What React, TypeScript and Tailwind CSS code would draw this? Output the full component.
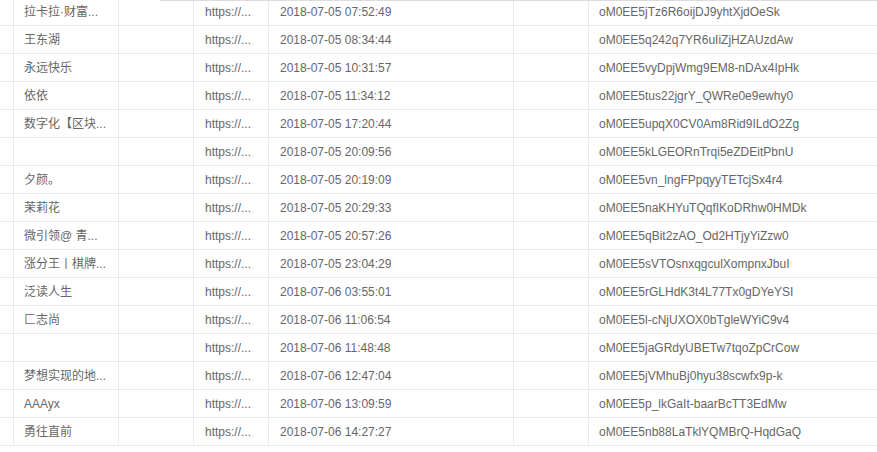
import React from "react";

const rows: [string, string, string][] = [
  ["拉卡拉·财富...", "2018-07-05 07:52:49", "oM0EE5jTz6R6oijDJ9yhtXjdOeSk"],
  ["王东湖", "2018-07-05 08:34:44", "oM0EE5q242q7YR6uIiZjHZAUzdAw"],
  ["永远快乐", "2018-07-05 10:31:57", "oM0EE5vyDpjWmg9EM8-nDAx4IpHk"],
  ["依依", "2018-07-05 11:34:12", "oM0EE5tus22jgrY_QWRe0e9ewhy0"],
  ["数字化【区块...", "2018-07-05 17:20:44", "oM0EE5upqX0CV0Am8Rid9ILdO2Zg"],
  ["", "2018-07-05 20:09:56", "oM0EE5kLGEORnTrqi5eZDEitPbnU"],
  ["夕颜。", "2018-07-05 20:19:09", "oM0EE5vn_lngFPpqyyTETcjSx4r4"],
  ["茉莉花", "2018-07-05 20:29:33", "oM0EE5naKHYuTQqfIKoDRhw0HMDk"],
  ["微引领@ 青...", "2018-07-05 20:57:26", "oM0EE5qBit2zAO_Od2HTjyYiZzw0"],
  ["涨分王丨棋牌...", "2018-07-05 23:04:29", "oM0EE5sVTOsnxqgculXompnxJbuI"],
  ["泛读人生", "2018-07-06 03:55:01", "oM0EE5rGLHdK3t4L77Tx0gDYeYSI"],
  ["匚志尚", "2018-07-06 11:06:54", "oM0EE5l-cNjUXOX0bTgleWYiC9v4"],
  ["", "2018-07-06 11:48:48", "oM0EE5jaGRdyUBETw7tqoZpCrCow"],
  ["梦想实现的地...", "2018-07-06 12:47:04", "oM0EE5jVMhuBj0hyu38scwfx9p-k"],
  ["AAAyx", "2018-07-06 13:09:59", "oM0EE5p_lkGaIt-baarBcTT3EdMw"],
  ["勇往直前", "2018-07-06 14:27:27", "oM0EE5nb88LaTklYQMBrQ-HqdGaQ"],
];

export default function App() {
  return (
    <div
      className="relative w-[877px] h-[452px] overflow-hidden bg-white text-[12px] text-[#666]"
      style={{ fontFamily: '"Liberation Sans", "Noto Sans CJK SC", sans-serif' }}
    >
      <div className="absolute top-0 left-[160px] right-0 h-px bg-[#dcdcdc]" />
      <div className="-mt-[2px]">
        {rows.map(([name, date, id], i) => (
          <div key={i} className="flex h-[28px] border-b border-[#e8e8e8]">
            <div className="w-[13px] shrink-0" />
            <div className="w-[105px] shrink-0 border-l border-[#ebebeb] pl-[10px] flex items-center whitespace-nowrap overflow-hidden">
              {name}
            </div>
            <div className="w-[75px] shrink-0 border-l border-[#ebebeb]" />
            <div className="w-[75px] shrink-0 border-l border-[#ebebeb] pl-[11px] flex items-center whitespace-nowrap overflow-hidden">
              https://...
            </div>
            <div className="w-[245px] shrink-0 border-l border-[#ebebeb] pl-[11px] flex items-center whitespace-nowrap overflow-hidden">
              {date}
            </div>
            <div className="w-[75px] shrink-0 border-l border-[#ebebeb]" />
            <div className="flex-1 border-l border-[#ebebeb] pl-[10px] flex items-center whitespace-nowrap">
              {id}
            </div>
          </div>
        ))}
      </div>
    </div>
  );
}
